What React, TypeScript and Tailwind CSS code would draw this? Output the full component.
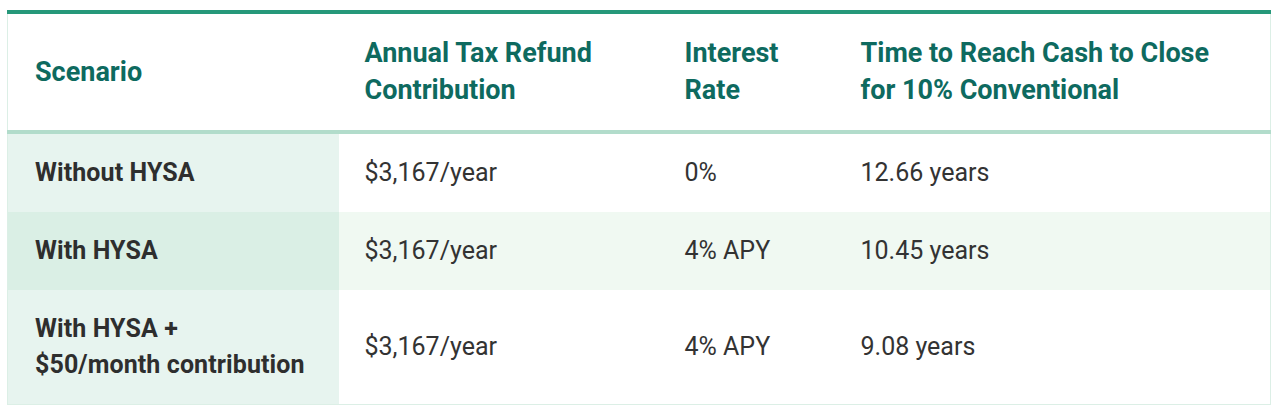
const rows = [
  { scenario: ['Without HYSA'], refund: '$3,167/year', rate: '0%', time: '12.66 years', alt: false },
  { scenario: ['With HYSA'], refund: '$3,167/year', rate: '4% APY', time: '10.45 years', alt: true },
  {
    scenario: ['With HYSA +', '$50/month contribution'],
    refund: '$3,167/year',
    rate: '4% APY',
    time: '9.08 years',
    alt: false,
  },
];

export default function App() {
  return (
    <div className="bg-white w-[1280px] h-[414px] pt-[10px] px-[7px]" style={{ fontFamily: 'Roboto, "Liberation Sans", sans-serif' }}>
      <table className="w-[1264px] border-collapse table-fixed border-t-4 border-t-[#26987a] border-x border-b border-x-[#dcefe6] border-b-[#dcefe6]">
        <colgroup>
          <col className="w-[331px]" />
          <col className="w-[319px]" />
          <col className="w-[176px]" />
          <col />
        </colgroup>
        <thead>
          <tr className="border-b-4 border-b-[#b2dccb] text-[#0e6a5f] text-[27px] leading-[37px] font-bold text-left">
            <th className="pl-[27px] pr-2 py-[21px] font-bold align-middle">Scenario</th>
            <th className="pl-[26px] pr-2 py-[21px] font-bold align-middle">
              Annual Tax Refund
              <br />
              Contribution
            </th>
            <th className="pl-[27px] pr-2 py-[21px] font-bold align-middle">
              Interest
              <br />
              Rate
            </th>
            <th className="pl-[27px] pr-2 py-[21px] font-bold align-middle">
              Time to Reach Cash to Close
              <br />
              for 10% Conventional
            </th>
          </tr>
        </thead>
        <tbody className="text-[25px] leading-[36px] text-[#333333]">
          {rows.map((row, i) => (
            <tr key={i} className={row.alt ? 'bg-[#f0f9f2]' : 'bg-white'}>
              <td className={`pl-[27px] pr-2 py-[21px] font-bold text-[#2e2e2e] ${row.alt ? 'bg-[#daefe5]' : 'bg-[#e7f4ef]'}`}>
                {row.scenario.map((line, j) => (
                  <div key={j} className="tracking-[0.1px]">{line}</div>
                ))}
              </td>
              <td className="pl-[26px] pr-2 py-[21px]">{row.refund}</td>
              <td className="pl-[27px] pr-2 py-[21px]">{row.rate}</td>
              <td className="pl-[27px] pr-2 py-[21px]">{row.time}</td>
            </tr>
          ))}
        </tbody>
      </table>
    </div>
  );
}
